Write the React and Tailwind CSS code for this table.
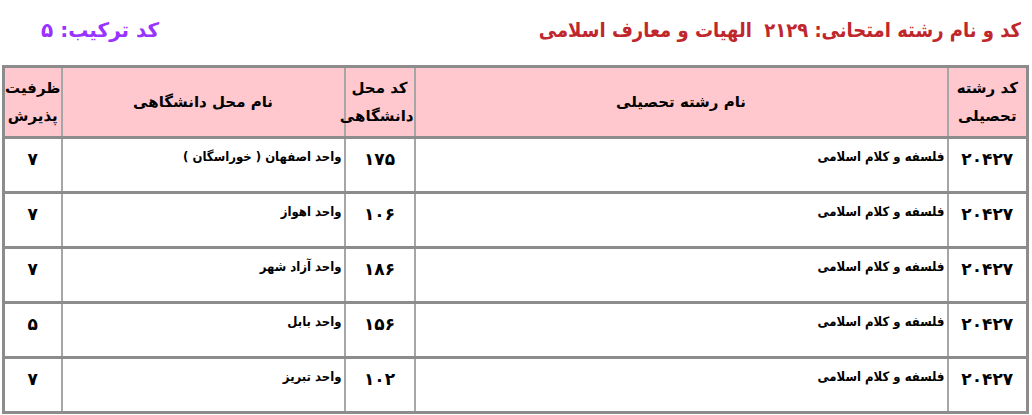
const rows = [
  { code: '۲۰۴۲۷', field: 'فلسفه و کلام اسلامی', uniCode: '۱۷۵', uni: 'واحد اصفهان ( خوراسگان )', cap: '۷' },
  { code: '۲۰۴۲۷', field: 'فلسفه و کلام اسلامی', uniCode: '۱۰۶', uni: 'واحد اهواز', cap: '۷' },
  { code: '۲۰۴۲۷', field: 'فلسفه و کلام اسلامی', uniCode: '۱۸۶', uni: 'واحد آزاد شهر', cap: '۷' },
  { code: '۲۰۴۲۷', field: 'فلسفه و کلام اسلامی', uniCode: '۱۵۶', uni: 'واحد بابل', cap: '۵' },
  { code: '۲۰۴۲۷', field: 'فلسفه و کلام اسلامی', uniCode: '۱۰۲', uni: 'واحد تبریز', cap: '۷' },
];

const th = 'border-x-2 border-y-[3px] border-x-[#a6a6a6] border-y-[#8c8c8c] bg-[#ffc7ce] text-center align-middle text-[15px] font-bold leading-[28px] text-black';
const td = 'border-x-2 border-y-[3px] border-x-[#a6a6a6] border-y-[#8c8c8c] align-top h-[55px] font-bold text-black';

export default function App() {
  return (
    <div dir="rtl" className="w-[1032px] h-[415px] bg-white px-[3px] font-['DejaVu_Sans',sans-serif]">
      <div className="flex h-[65px] items-center justify-between pr-[8px] pl-[38px] pb-[6px]">
        <h1 className="text-[20px] font-bold text-[#c0272d] font-['DejaVu_Sans_Condensed','DejaVu_Sans',sans-serif]">
          کد و نام رشته امتحانی: <span className="ml-[6px]">۲۱۲۹</span> الهیات و معارف اسلامی
        </h1>
        <div className="text-[20px] font-bold text-[#9933ff]">کد ترکیب: ۵</div>
      </div>

      <table className="w-[1026px] table-fixed border-collapse border-[3px] border-[#8c8c8c]">
        <colgroup>
          <col className="w-[80px]" />
          <col className="w-[533px]" />
          <col className="w-[70px]" />
          <col className="w-[283px]" />
          <col className="w-[58px]" />
        </colgroup>
        <thead>
          <tr className="h-[71px]">
            <th className={th}>کد رشته<br />تحصیلی</th>
            <th className={th}>نام رشته تحصیلی</th>
            <th className={th}>کد محل<br />دانشگاهی</th>
            <th className={th}>نام محل دانشگاهی</th>
            <th className={th}>ظرفیت<br />پذیرش</th>
          </tr>
        </thead>
        <tbody>
          {rows.map((r, i) => (
            <tr key={i}>
              <td className={`${td} pt-[8px] text-center text-[17px]`}>{r.code}</td>
              <td className={`${td} pt-[8px] pr-[2px] text-right text-[13px] font-['DejaVu_Sans_Condensed','DejaVu_Sans',sans-serif]`}>{r.field}</td>
              <td className={`${td} pt-[8px] text-center text-[17px]`}>{r.uniCode}</td>
              <td className={`${td} pt-[8px] pr-[2px] text-right text-[13px] font-['DejaVu_Sans_Condensed','DejaVu_Sans',sans-serif]`}>{r.uni}</td>
              <td className={`${td} pt-[8px] text-center text-[17px]`}>{r.cap}</td>
            </tr>
          ))}
        </tbody>
      </table>
    </div>
  );
}
